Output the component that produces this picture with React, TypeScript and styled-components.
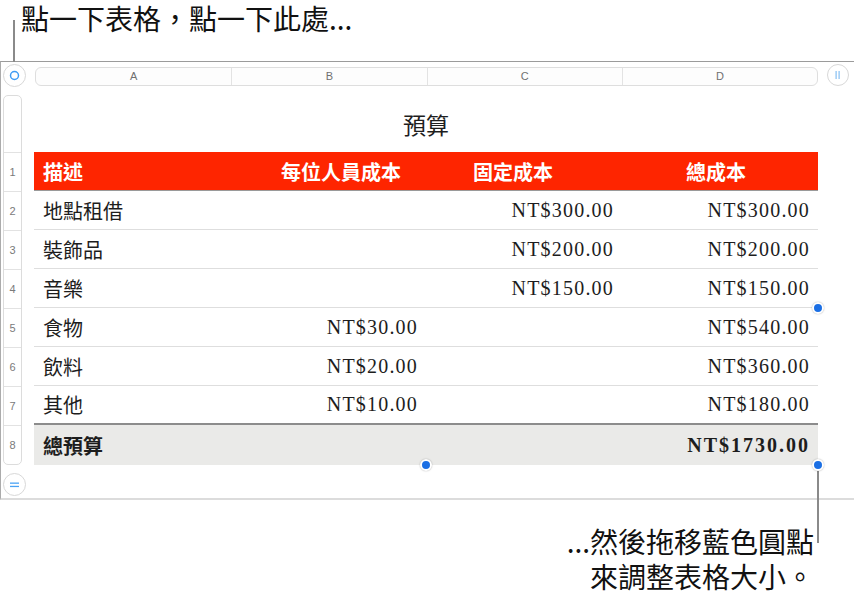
import * as React from 'react';
import styled, { createGlobalStyle } from 'styled-components';

interface BudgetRow {
  label: string;
  perPerson?: string;
  fixed?: string;
  total: string;
}

const rows: BudgetRow[] = [
  { label: '地點租借', fixed: 'NT$300.00', total: 'NT$300.00' },
  { label: '裝飾品', fixed: 'NT$200.00', total: 'NT$200.00' },
  { label: '音樂', fixed: 'NT$150.00', total: 'NT$150.00' },
  { label: '食物', perPerson: 'NT$30.00', total: 'NT$540.00' },
  { label: '飲料', perPerson: 'NT$20.00', total: 'NT$360.00' },
  { label: '其他', perPerson: 'NT$10.00', total: 'NT$180.00' },
];

const columns = ['A', 'B', 'C', 'D'];

/** 說明頁 */
const App = () => {
  return (
    <Page>
      <GlobalStyle />
      <TopCaption>點一下表格，點一下此處...</TopCaption>
      <Leader $left={13} $top={20} $height={42} />

      <Frame>
        <CornerButton aria-label="選取表格">
          <svg width="11" height="11" viewBox="0 0 11 11">
            <circle cx="5.5" cy="5.5" r="4" fill="none" stroke="#3f9cf4" strokeWidth="1.5" />
          </svg>
        </CornerButton>
        <ColumnBar>
          {columns.map((c, i) => (
            <ColumnLabel key={c} $first={i === 0}>
              {c}
            </ColumnLabel>
          ))}
        </ColumnBar>
        <SideButton aria-label="欄">
          <svg width="8" height="10" viewBox="0 0 8 10">
            <rect x="1.5" y="1" width="1.2" height="8" fill="#86bff3" />
            <rect x="4.5" y="1" width="1.2" height="8" fill="#86bff3" />
          </svg>
        </SideButton>

        <RowHeader>
          <RowHeaderTop />
          {[1, 2, 3, 4, 5, 6, 7, 8].map((n) => (
            <RowNumber key={n} $last={n === 8}>
              {n}
            </RowNumber>
          ))}
        </RowHeader>

        <TableArea>
          <Title>預算</Title>
          <HeaderRow>
            <HeaderCell $pad="0 0 0 9px">描述</HeaderCell>
            <HeaderCell $pad="0 25px 0 0" $right>
              每位人員成本
            </HeaderCell>
            <HeaderCell $pad="0 0 0 47px">固定成本</HeaderCell>
            <HeaderCell $pad="0 0 0 64px">總成本</HeaderCell>
          </HeaderRow>
          {rows.map((r, i) => (
            <BodyRow key={r.label} $divider={i === rows.length - 1 ? '#8c8c8c' : '#dedede'} $thick={i === rows.length - 1}>
              <TextCell>{r.label}</TextCell>
              <NumCell>{r.perPerson}</NumCell>
              <NumCell>{r.fixed}</NumCell>
              <NumCell>{r.total}</NumCell>
            </BodyRow>
          ))}
          <TotalRow>
            <TextCell $bold>總預算</TextCell>
            <NumCell />
            <NumCell />
            <NumCell $bold>NT$1730.00</NumCell>
          </TotalRow>

          <Handle $x={784} $y={213} />
          <Handle $x={392} $y={370} />
          <Handle $x={784} $y={370} />
        </TableArea>
        <div />

        <CornerButton $bottom aria-label="列">
          <svg width="11" height="8" viewBox="0 0 11 8">
            <rect x="1" y="1.5" width="9" height="1.3" fill="#4aa3f5" />
            <rect x="1" y="4.8" width="9" height="1.3" fill="#4aa3f5" />
          </svg>
        </CornerButton>
      </Frame>

      <Leader $left={817} $top={469} $height={74} />
      <BottomCaption>
        ...然後拖移藍色圓點
        <br />
        來調整表格大小。
      </BottomCaption>
    </Page>
  );
};

const GlobalStyle = createGlobalStyle`
  html, body {
    margin: 0;
    padding: 0;
    background: #fff;
  }
  body {
    font-family: "Noto Sans CJK TC", "Noto Sans", sans-serif;
  }
`;

const Page = styled.div`
  position: relative;
  width: 854px;
  height: 601px;
  overflow: hidden;
  background: #fff;
`;

const TopCaption = styled.div`
  box-sizing: border-box;
  height: 61px;
  padding: 1px 0 0 21px;
  font-size: 28px;
  line-height: 34px;
  color: #111;
`;

const Leader = styled.div<{ $left: number; $top: number; $height: number }>`
  position: absolute;
  left: ${(p) => p.$left}px;
  top: ${(p) => p.$top}px;
  width: 2px;
  height: ${(p) => p.$height}px;
  background: #8a8a8a;
  z-index: 2;
`;

const Frame = styled.div`
  display: grid;
  grid-template-columns: 33px 784px 1fr;
  grid-template-rows: 33px 370px 33px;
  border-top: 1px solid #9b9b9b;
  border-left: 1px solid #ababab;
  border-bottom: 2px solid #dcdcdc;
`;

const CornerButton = styled.div<{ $bottom?: boolean }>`
  box-sizing: border-box;
  width: 23px;
  height: 23px;
  margin: ${(p) => (p.$bottom ? '8px 0 0 2px' : '2px 0 0 2px')};
  border: 1px solid #d8d8d8;
  border-radius: 50%;
  background: #fff;
  display: flex;
  align-items: center;
  justify-content: center;
`;

const SideButton = styled.div`
  box-sizing: border-box;
  width: 22px;
  height: 22px;
  margin: 2px 0 0 9px;
  border: 1px solid #d8d8d8;
  border-radius: 50%;
  background: #fff;
  display: flex;
  align-items: center;
  justify-content: center;
`;

const ColumnBar = styled.div`
  box-sizing: border-box;
  height: 19px;
  margin: 5px 0 0 1px;
  border: 1px solid #dedede;
  border-radius: 6px;
  background: #fdfdfd;
  display: grid;
  grid-template-columns: repeat(4, 1fr);
`;

const ColumnLabel = styled.div<{ $first: boolean }>`
  border-left: ${(p) => (p.$first ? 'none' : '1px solid #e3e3e3')};
  font-family: "Liberation Sans", Arial, sans-serif;
  font-size: 11px;
  line-height: 17px;
  color: #707070;
  text-align: center;
`;

const RowHeader = styled.div`
  box-sizing: border-box;
  width: 19px;
  margin-left: 2px;
  border: 1px solid #dcdcdc;
  border-radius: 5px;
  display: flex;
  flex-direction: column;
  overflow: hidden;
`;

const RowHeaderTop = styled.div`
  height: 56px;
  flex: none;
`;

const RowNumber = styled.div<{ $last: boolean }>`
  box-sizing: border-box;
  height: ${(p) => (p.$last ? 'auto' : '39px')};
  flex: ${(p) => (p.$last ? '1' : 'none')};
  border-top: 1px solid #e2e2e2;
  display: flex;
  align-items: center;
  justify-content: center;
  font-family: "Liberation Sans", Arial, sans-serif;
  font-size: 11px;
  color: #7a7a7a;
`;

const TableArea = styled.div`
  position: relative;
  display: flex;
  flex-direction: column;
`;

const Title = styled.div`
  height: 57px;
  flex: none;
  display: flex;
  align-items: center;
  justify-content: center;
  font-size: 23px;
  color: #1e1e1e;
`;

const HeaderRow = styled.div`
  box-sizing: border-box;
  height: 39px;
  flex: none;
  display: grid;
  grid-template-columns: repeat(4, 196px);
  background: #fe2500;
  border-bottom: 1px solid #9a9a9a;
  color: #fff;
  font-size: 20px;
  font-weight: bold;
`;

const HeaderCell = styled.div<{ $pad: string; $right?: boolean }>`
  display: flex;
  align-items: center;
  justify-content: ${(p) => (p.$right ? 'flex-end' : 'flex-start')};
  padding: ${(p) => p.$pad};
`;

const BodyRow = styled.div<{ $divider: string; $thick?: boolean }>`
  box-sizing: border-box;
  height: 39px;
  flex: none;
  display: grid;
  grid-template-columns: repeat(4, 196px);
  border-bottom: ${(p) => (p.$thick ? 2 : 1)}px solid ${(p) => p.$divider};
`;

const TotalRow = styled.div`
  flex: 1;
  display: grid;
  grid-template-columns: repeat(4, 196px);
  background: #eaeae8;
`;

const TextCell = styled.div<{ $bold?: boolean }>`
  display: flex;
  align-items: center;
  padding-left: 9px;
  font-size: 20px;
  font-weight: ${(p) => (p.$bold ? 'bold' : 'normal')};
  color: #1d1d1d;
`;

const NumCell = styled.div<{ $bold?: boolean }>`
  display: flex;
  align-items: center;
  justify-content: flex-end;
  padding-right: 8px;
  font-family: "Liberation Serif", "Times New Roman", serif;
  font-size: 20px;
  letter-spacing: ${(p) => (p.$bold ? '2px' : '1.2px')};
  font-weight: ${(p) => (p.$bold ? 'bold' : 'normal')};
  color: #1d1d1d;
`;

const Handle = styled.div<{ $x: number; $y: number }>`
  position: absolute;
  left: ${(p) => p.$x}px;
  top: ${(p) => p.$y}px;
  width: 8px;
  height: 8px;
  border: 2px solid #fff;
  border-radius: 50%;
  background: #1b6fe4;
  box-shadow: 0 0 1.5px rgba(0, 0, 0, 0.35);
  transform: translate(-50%, -50%);
  z-index: 3;
`;

const BottomCaption = styled.div`
  margin-top: 24px;
  padding-right: 40px;
  text-align: right;
  font-size: 28px;
  line-height: 35px;
  color: #111;
`;

export default App;
